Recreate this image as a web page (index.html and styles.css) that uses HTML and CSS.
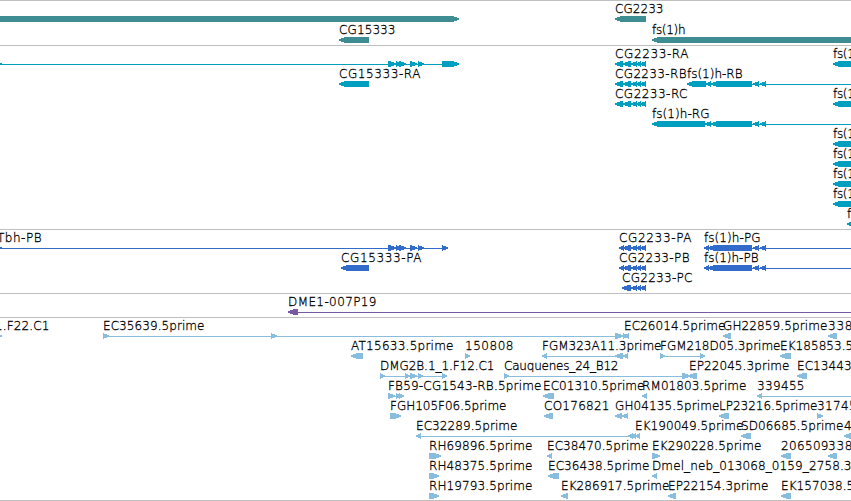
FILE: index.html
```
<!DOCTYPE html>
<html>
<head>
    <meta charset="utf-8">
    <title>Genome Browser</title>
    <link rel="stylesheet" href="styles.css">
</head>
<body>
    <div id="browser">
        <div class="track genes" id="genes"></div>
        <div class="track transcripts" id="transcripts"></div>
        <div class="track proteins" id="proteins"></div>
        <div class="track clones" id="clones"></div>
        <div class="track ests" id="ests"></div>
    </div>
    <script src="tracks.js"></script>
</body>
</html>
```

FILE: styles.css
```
body {
    margin: 0;
    background: #fff;
    overflow: hidden;
}

#browser {
    width: 851px;
    border-bottom: 1px solid #bfbfbf;
}

.track {
    display: flex;
    flex-direction: column;
    border-top: 1px solid #bfbfbf;
    padding-bottom: 3px;
}

.row {
    display: block;
    width: 851px;
    height: 20px;
    overflow: visible;
}

.row text {
    font-family: "DejaVu Sans Light", "DejaVu Sans", sans-serif;
    font-weight: 200;
    font-size: 12px;
    fill: #000;
    stroke: #000;
    stroke-width: 0.3px;
}

.row rect, .row polygon {
    shape-rendering: crispEdges;
}

.genes {
    fill: #3d8d92;
    padding-bottom: 2px;
}

.genes .row {
    height: 21px;
}

.transcripts {
    fill: #009fbf;
}

.proteins {
    fill: #326ccb;
}

.clones {
    fill: #7859a4;
}

.ests {
    fill: #88bddd;
    padding-bottom: 2px;
}
```

FILE: tracks.js
```
// feature: [label, label x, label end, direction, exons, intron line]
var END = 851;

var cg2233 = [[615, 623], [623, 631], [631, 637], [636, 641], [640, 646]];
var tbhExons = [[-4, 2], [388, 396], [396, 401], [399, 406], [410, 417], [418, 424]];
var fshTail = [[753, 759], [760, 766]];

function fsh(x) {
    return ["fs(1)h", x, x + 33, "<", [[x, x + 40]]];
}

var tracks = {
    genes: [
        [
            ["", 0, 0, ">", [[-10, 459]]],
            ["CG2233", 615, 663, "<", [[615, 646]]]
        ],
        [
            ["CG15333", 339, 395, "<", [[339, 369]]],
            ["fs(1)h", 652, 685, "<", [[652, 870]]]
        ]
    ],
    transcripts: [
        [
            ["", 0, 0, ">", tbhExons.concat([[442, 459]]), [0, 459]],
            ["CG2233-RA", 615, 688, "<", cg2233, [617, 645]],
            fsh(833)
        ],
        [
            ["CG15333-RA", 339, 420, "<", [[339, 369]]],
            ["CG2233-RB", 615, 686, "<", cg2233, [617, 645]],
            ["fs(1)h-RB", 687, 742, "<", [[687, 706], [706, 711], [711, 752]].concat(fshTail), [690, END]]
        ],
        [
            ["CG2233-RC", 615, 687, "<", cg2233, [617, 645]],
            fsh(833)
        ],
        [
            ["fs(1)h-RG", 652, 709, "<", [[652, 705], [705, 711], [711, 752]].concat(fshTail), [655, END]]
        ],
        [fsh(833)],
        [fsh(833)],
        [fsh(833)],
        [fsh(833)],
        [fsh(847)]
    ],
    proteins: [
        [
            ["Tbh-PB", -3, 41, ">", tbhExons.concat([[442, 448]]), [0, 448]],
            ["CG2233-PA", 619, 691, "<", [[619, 624], [623, 631]].concat(cg2233.slice(2)), [620, 645]],
            ["fs(1)h-PG", 704, 760, "<", [[704, 709], [708, 752]].concat(fshTail), [705, END]]
        ],
        [
            ["CG15333-PA", 341, 421, "<", [[341, 369]]],
            ["CG2233-PB", 619, 689, "<", [[619, 624], [623, 631]].concat(cg2233.slice(2)), [620, 645]],
            ["fs(1)h-PB", 704, 758, "<", [[704, 709], [708, 752]].concat(fshTail), [705, END]]
        ],
        [
            ["CG2233-PC", 622, 692, "<", [[622, 631]].concat(cg2233.slice(2)), [624, 645]]
        ]
    ],
    clones: [
        [
            ["DME1-007P19", 288, 376, "<", [[288, 298]], [290, END]]
        ]
    ],
    ests: [
        [
            ["1.F22.C1", -5, 49, ">", [[-4, 2]]],
            ["EC35639.5prime", 103, 204, ">", [[103, 109], [271, 277], [615, 623]], [103, 627]],
            ["EC26014.5prime", 624, 725, ">", [[623, 627]]],
            ["", 0, 0, "<", [[624, 629]]],
            ["GH22859.5prime", 723, 827, "<", [[723, 731]]],
            ["338", 828, 852, "<", [[828, 837]]]
        ],
        [
            ["AT15633.5prime", 351, 453, "<", [[351, 363]]],
            ["150808", 465, 513, ">", [[465, 470]]],
            ["FGM323A11.3prime", 542, 661, "<", [[542, 547], [615, 623], [623, 628]], [543, 627]],
            ["FGM218D05.3prime", 660, 780, ">", [[660, 665], [700, 705]], [660, 704]],
            ["EK185853.5prime", 780, 888, "<", [[780, 791]]]
        ],
        [
            ["DMG2B.1_1.F12.C1", 380, 494, ">", [[380, 385], [405, 410], [410, 417], [418, 423], [442, 447]], [380, 446]],
            ["Cauquenes_24_B12", 504, 618, ">", [[504, 509], [682, 690]], [504, 690]],
            ["EP22045.3prime", 689, 789, "<", [[688, 697]]],
            ["EC13443.5prime", 797, 898, "<", [[797, 807]]]
        ],
        [
            ["FB59-CG1543-RB.5prime", 388, 541, ">", [[388, 395], [396, 400], [399, 404]], [388, 403]],
            ["EC01310.5prime", 543, 644, "<", [[543, 554]]],
            ["RM01803.5prime", 642, 746, "<", [[642, 647]]],
            ["339455", 757, 804, "<", [[757, 762]], [758, END]]
        ],
        [
            ["FGH105F06.5prime", 390, 506, ">", [[390, 401]]],
            ["CO176821", 544, 609, "<", [[544, 553]]],
            ["GH04135.5prime", 615, 719, "<", [[615, 622], [622, 628]]],
            ["LP23216.5prime", 719, 817, "<", [[719, 729]]],
            ["317455", 817, 864, ">", [[817, 823]]]
        ],
        [
            ["EC32289.5prime", 416, 517, "<", [[416, 421], [628, 633]], [417, 632]],
            ["EK190049.5prime", 635, 743, "<", [[632, 636], [635, 640]]],
            ["SD06685.5prime", 741, 843, "<", [[741, 751]]],
            ["4", 844, 852, "<", [[844, 856]]]
        ],
        [
            ["RH69896.5prime", 429, 532, ">", [[429, 441]]],
            ["EC38470.5prime", 547, 648, "<", [[547, 552]]],
            ["EK290228.5prime", 652, 761, ">", [[652, 660]]],
            ["206509", 781, 828, "<", [[781, 791]]],
            ["338", 828, 852, "<", [[828, 837]]]
        ],
        [
            ["RH48375.5prime", 429, 532, ">", [[429, 439]]],
            ["EC36438.5prime", 548, 649, "<", [[548, 559]]],
            ["Dmel_neb_013068_0159_2758.3", 652, 851, "<", [[652, 657]]]
        ],
        [
            ["RH19793.5prime", 429, 532, ">", [[429, 439]]],
            ["EK286917.5prime", 561, 669, "<", [[561, 568]]],
            ["EP22154.3prime", 668, 768, "<", [[668, 676]]],
            ["EK157038.5prime", 781, 889, "<", [[781, 791]]]
        ]
    ]
};

function make(parent, name, attrs) {
    var el = document.createElementNS("http://www.w3.org/2000/svg", name);
    for (var key in attrs) {
        el.setAttribute(key, attrs[key]);
    }
    parent.appendChild(el);
    return el;
}

function drawExon(svg, a, b, dir) {
    var tip = Math.min(6, b - a);
    var points;
    if (dir === "<") {
        points = [[b, 15], [a + tip, 15], [a, 17.3], [a, 18.7], [a + tip, 21], [b, 21]];
    } else {
        points = [[a, 15], [b - tip, 15], [b, 17.3], [b, 18.7], [b - tip, 21], [a, 21]];
    }
    make(svg, "polygon", { points: points.join(" ") });
}

function drawFeature(svg, f) {
    if (f[5]) {
        make(svg, "rect", { x: f[5][0], y: 18, width: f[5][1] - f[5][0], height: 1 });
    }
    f[4].forEach(function(exon) {
        drawExon(svg, exon[0], exon[1], f[3]);
    });
    if (f[0]) {
        var label = make(svg, "text", { x: f[1], y: 12, textLength: f[2] - f[1] + 0.5 });
        label.textContent = f[0];
    }
}

for (var id in tracks) {
    var track = document.getElementById(id);
    tracks[id].forEach(function(features) {
        var svg = make(track, "svg", { "class": "row" });
        features.forEach(function(f) {
            drawFeature(svg, f);
        });
    });
}
```
